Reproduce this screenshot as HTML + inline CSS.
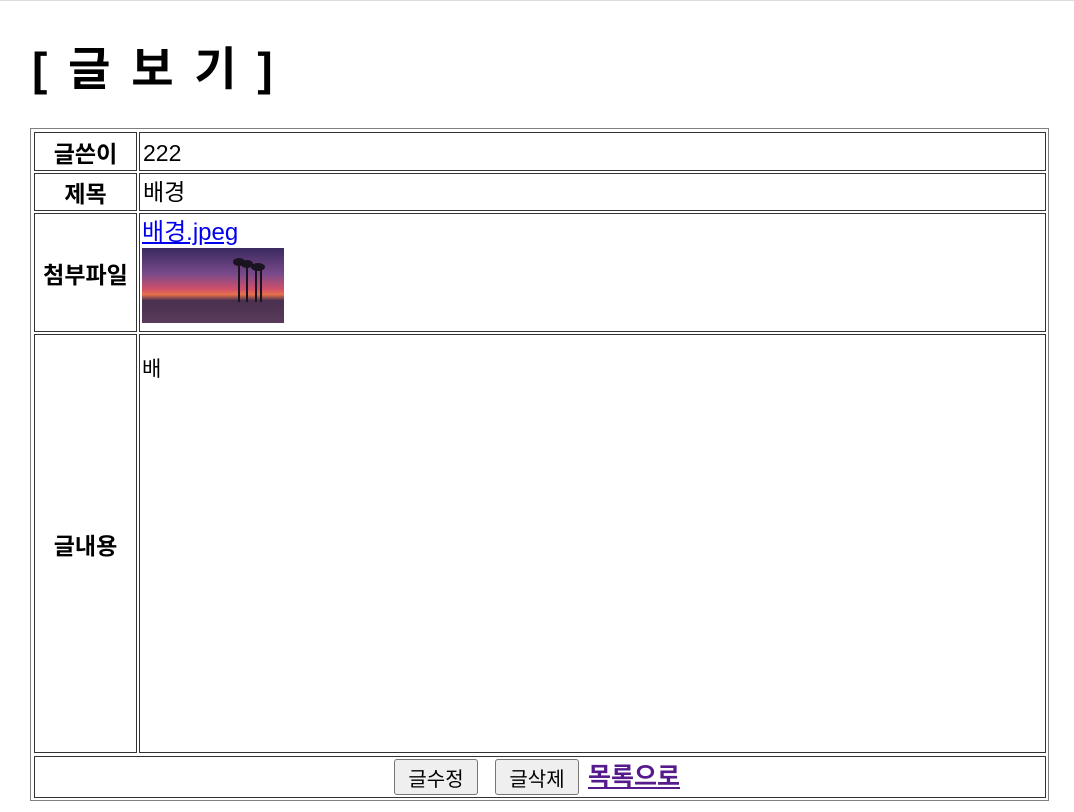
<!DOCTYPE html>
<html><head><meta charset="utf-8"><style>
body{margin:0;width:1074px;height:812px;background:#fff;font-family:"Liberation Sans","Noto Sans CJK KR",sans-serif;position:relative;overflow:hidden}
.top{position:absolute;left:0;top:0;width:1074px;height:1px;background:#dcdcdc}
h1{position:absolute;left:32px;top:39px;margin:0;font-size:46px;font-weight:bold;letter-spacing:0;word-spacing:8px;line-height:60px;white-space:pre}
.b{position:absolute;box-sizing:border-box}
.o{border:1px solid #808080}
.c{border:1px solid #333}
.h{font-weight:bold;font-size:23px;display:flex;align-items:center;justify-content:center}
.t{font-size:23px;padding-left:3px;line-height:40px}
a{color:#00e}
.btn{position:absolute;top:759px;height:36px;box-sizing:border-box;border:1px solid #767676;border-radius:3px;background:#efefef;font-size:20px;display:flex;align-items:center;justify-content:center}
</style></head><body>
<div class="top"></div>
<h1>[ 글 보 기 ]</h1>
<div class="b o" style="left:30px;top:128px;width:1019px;height:673px"></div>
<div class="b c h" style="left:34px;top:132px;width:103px;height:39px">글쓴이</div>
<div class="b c t" style="left:139px;top:132px;width:907px;height:39px">222</div>
<div class="b c h" style="left:34px;top:173px;width:103px;height:38px">제목</div>
<div class="b c t" style="left:139px;top:173px;width:907px;height:38px;line-height:36px">배경</div>
<div class="b c h" style="left:34px;top:213px;width:103px;height:119px">첨부파일</div>
<div class="b c" style="left:139px;top:213px;width:907px;height:119px">
<div style="position:absolute;left:2px;top:5px;font-size:24px;line-height:28px"><a href="#">배경.jpeg</a></div>
<svg style="position:absolute;left:2px;top:34px" width="142" height="75" viewBox="0 0 142 75">
<defs><linearGradient id="g" x1="0" y1="0" x2="0" y2="1">
<stop offset="0" stop-color="#3a2a5e"/><stop offset="0.35" stop-color="#7a4a8a"/><stop offset="0.55" stop-color="#d0506a"/><stop offset="0.62" stop-color="#e8704a"/><stop offset="0.7" stop-color="#4a3050"/><stop offset="1" stop-color="#5a3a5a"/></linearGradient></defs>
<rect width="142" height="75" fill="url(#g)"/>
<g fill="#1a1420"><rect x="96" y="12" width="2" height="42"/><rect x="104" y="14" width="2" height="40"/><rect x="113" y="18" width="2" height="36"/><rect x="118" y="16" width="2" height="38"/>
<ellipse cx="97" cy="14" rx="6" ry="4"/><ellipse cx="105" cy="16" rx="6" ry="4"/><ellipse cx="116" cy="19" rx="7" ry="4"/></g>
</svg></div>
<div class="b c h" style="left:34px;top:334px;width:103px;height:419px">글내용</div>
<div class="b c" style="left:139px;top:334px;width:907px;height:419px;font-size:21px;padding:18px 0 0 2px">배</div>
<div class="b c" style="left:34px;top:756px;width:1012px;height:42px"></div>
<div class="btn" style="left:394px;width:84px">글수정</div>
<div class="btn" style="left:495px;width:84px">글삭제</div>
<a href="#" style="position:absolute;left:588px;top:763px;font-size:25px;font-weight:bold;color:#551a8b;line-height:28px">목록으로</a>
</body></html>
